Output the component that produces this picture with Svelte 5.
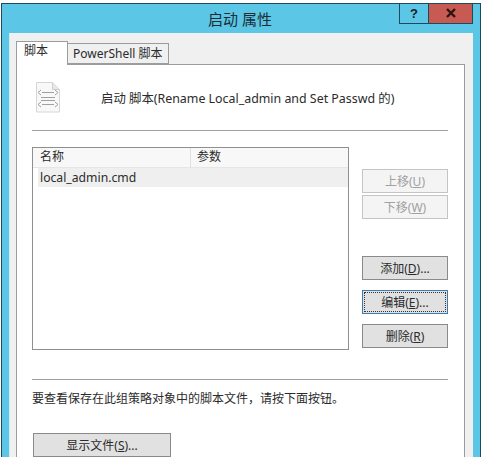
<script>
  let scripts = [{ name: 'local_admin.cmd', params: '' }];
</script>

<div class="dialog">
  <div class="titlebar">
    <span class="title">启动 属性</span>
    <div class="controls">
      <button class="help">?</button>
      <button class="close">
        <svg width="12" height="10" viewBox="0 0 12 10"><path d="M2 1l8 8M10 1l-8 8" stroke="#2a1512" stroke-width="2.4" fill="none" /></svg>
      </button>
    </div>
  </div>

  <div class="client">
    <div class="tabs">
      <div class="tab active">脚本</div>
      <div class="tab">PowerShell 脚本</div>
    </div>

    <div class="page">
      <div class="head">
        <svg class="file-icon" width="26" height="33" viewBox="0 0 26 33">
          <path d="M1.500 1.500h16l7 7v22.500h-23z" fill="#f8f8f8" stroke="#d6d6d6" />
          <path d="M17.500 1.500v7h7" fill="#e8e8e8" stroke="#d0d0d0" />
          <path d="M6 9l-3 2.500 3 2.500M20 9l3 2.500-3 2.500M6 21l-3 2.500 3 2.500M20 21l3 2.500-3 2.500" fill="none" stroke="#a0a0a0" />
          <path d="M7 11.500h12M6 16.500h14M6 19.500h14M7 23.500h12" stroke="#a0a0a0" />
        </svg>
        <span class="head-text">启动 脚本(Rename Local_admin and Set Passwd 的)</span>
      </div>

      <hr />

      <div class="middle">
        <div class="list">
          <div class="list-head">
            <div class="col-name">名称</div>
            <div class="col-params">参数</div>
          </div>
          {#each scripts as s}
            <div class="list-row">
              <div class="col-name">{s.name}</div>
              <div class="col-params">{s.params}</div>
            </div>
          {/each}
        </div>

        <div class="side">
          <button class="btn" disabled>上移(<u>U</u>)</button>
          <button class="btn down" disabled>下移(<u>W</u>)</button>
          <button class="btn add">添加(<u>D</u>)...</button>
          <button class="btn edit focused"><span>编辑(<u>E</u>)...</span></button>
          <button class="btn remove">删除(<u>R</u>)</button>
        </div>
      </div>

      <hr class="lower" />

      <p class="hint">要查看保存在此组策略对象中的脚本文件，请按下面按钮。</p>

      <button class="btn show">显示文件(<u>S</u>)...</button>
    </div>
  </div>
</div>

<style>
  :global(body) {
    margin: 0;
    background: #fff;
    overflow: hidden;
  }

  .dialog {
    box-sizing: border-box;
    width: 480px;
    height: 454px;
    margin-top: 3px;
    margin-left: 1px;
    background: #5bc6e6;
    border: 1px solid #1d4a5c;
    border-bottom: none;
    font-family: "Noto Sans", "Noto Sans CJK SC", sans-serif;
    font-size: 12px;
    color: #2b2b2b;
    overflow: hidden;
  }

  .titlebar {
    position: relative;
    height: 29px;
    text-align: center;
  }

  .title {
    display: block;
    padding: 5px 2px 0 0;
    font-size: 15px;
    line-height: 20px;
    color: #1c2c33;
  }

  .controls {
    position: absolute;
    top: -1px;
    right: 7px;
    display: flex;
  }

  .controls button {
    box-sizing: border-box;
    height: 21px;
    padding: 0;
    border: 1px solid #1d4a5c;
    border-top: none;
    font-family: "Liberation Sans", sans-serif;
    font-weight: bold;
    font-size: 13px;
    color: #1c2024;
  }

  .help {
    width: 29px;
    background: #5bc6e6;
    border-right: none !important;
  }

  .close {
    width: 45px;
    background: #c75a52;
  }

  .client {
    box-sizing: border-box;
    height: 425px;
    margin: 0 7px 0 7px;
    padding: 8px 8px 0 6px;
    background: #f0f0f0;
    border-left: 1px solid #d5eaf1;
  }

  .tabs {
    display: flex;
    align-items: flex-end;
    height: 23px;
  }

  .tab {
    box-sizing: border-box;
    height: 21px;
    padding: 0 5px;
    line-height: 19px;
    font-size: 12px;
    border: 1px solid #9c9c9c;
    border-left: none;
    border-bottom: 1px solid #9c9c9c;
    background: #f0f0f0;
    white-space: nowrap;
    width: 101px;
  }

  .tab.active {
    position: relative;
    z-index: 1;
    width: 52px;
    height: 24px;
    margin-bottom: -1px;
    padding: 0 7px;
    line-height: 17px;
    background: #fff;
    border-left: 1px solid #9c9c9c;
    border-bottom: none;
  }

  .page {
    box-sizing: border-box;
    height: 394px;
    padding: 0 16px 0 15px;
    background: #fff;
    border: 1px solid #9c9c9c;
    border-bottom: none;
  }

  .head {
    display: flex;
    align-items: center;
    height: 65px;
    padding-left: 3px;
  }

  .file-icon {
    margin-top: -1px;
  }

  .head-text {
    margin-left: 40px;
    margin-top: 0;
    font-size: 12.400px;
    white-space: nowrap;
  }

  hr {
    margin: 0;
    border: none;
    border-top: 1px solid #a0a0a0;
  }

  .middle {
    display: flex;
    justify-content: space-between;
    margin-top: 16px;
  }

  .list {
    box-sizing: border-box;
    width: 317px;
    height: 203px;
    border: 1px solid #8f8f8f;
  }

  .list-head {
    display: flex;
    height: 19px;
    line-height: 18px;
    background: #f8f8f8;
    border-bottom: 1px solid #e6e6e6;
  }

  .list-row {
    display: flex;
    height: 19px;
    margin-left: 5px;
    line-height: 20px;
    font-size: 12.200px;
    background: #efefef;
  }

  .col-name {
    box-sizing: border-box;
    width: 158px;
    padding-left: 2px;
  }

  .list-head .col-name {
    width: 158px;
    padding-left: 7px;
    border-right: 1px solid #e0e0e0;
  }

  .list-head .col-params {
    padding-left: 6px;
  }

  .side {
    display: flex;
    flex-direction: column;
    width: 86px;
    padding-top: 22px;
  }

  .btn {
    box-sizing: border-box;
    height: 24px;
    padding: 0;
    font-family: inherit;
    font-size: 12px;
    color: #2b2b2b;
    background: #e1e1e1;
    border: 1px solid #8a8a8a;
  }

  .btn:disabled {
    color: #a0a0a0;
    background: #f4f4f4;
    border-color: #c4c4c4;
  }

  .down {
    margin-top: 2px;
  }

  .add {
    margin-top: 37px;
  }

  .edit {
    margin-top: 10px;
    padding: 1px;
    border-color: #3d7bad;
  }

  .edit span {
    display: block;
    height: 20px;
    line-height: 19px;
    box-sizing: border-box;
    border: 1px dotted #333;
  }

  .remove {
    margin-top: 10px;
  }

  .lower {
    margin-top: 29px;
  }

  .hint {
    margin: 10px 0 0;
    line-height: 17px;
    font-size: 12px;
    white-space: nowrap;
  }

  .show {
    display: block;
    width: 138px;
    margin: 26px 0 0 1px;
  }
</style>
